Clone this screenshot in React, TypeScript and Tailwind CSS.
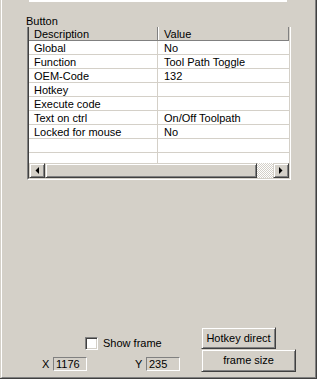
import React from "react";

const raised =
  "bg-[#d4d0c8] border border-t-[#d4d0c8] border-l-[#d4d0c8] border-r-[#404040] border-b-[#404040] shadow-[inset_1px_1px_#ffffff,inset_-1px_-1px_#808080]";

function ArrowLeft() {
  return (
    <svg width="4" height="7" viewBox="0 0 4 7" className="block">
      <polygon points="4,0 4,7 0.5,3.5" fill="#000" />
    </svg>
  );
}
function ArrowRight() {
  return (
    <svg width="4" height="7" viewBox="0 0 4 7" className="block">
      <polygon points="0,0 0,7 3.5,3.5" fill="#000" />
    </svg>
  );
}

export default function App() {
  const rows: [string, string][] = [
    ["Global", "No"],
    ["Function", "Tool Path Toggle"],
    ["OEM-Code", "132"],
    ["Hotkey", ""],
    ["Execute code", ""],
    ["Text on ctrl", "On/Off Toolpath"],
    ["Locked for mouse", "No"],
    ["", ""],
  ];
  return (
    <div className="w-[317px] h-[379px] bg-[#d4d0c8] pl-[1px] border-r border-b border-r-[#404040] border-b-[#404040] font-['Liberation_Sans',Arial,sans-serif] text-[11px] leading-[13px] text-black">
      <div className="h-full flex flex-col border-l border-l-white border-r border-r-[#808080] border-b border-b-[#808080]">
        {/* top white strip */}
        <div className="ml-[27px] w-[258px] h-[2px] bg-white" />
        {/* label */}
        <div className="ml-[24px] mt-[13px] h-[12px] leading-[13px]">Button</div>
        {/* list view */}
        <div className="ml-[25px] w-[264px] h-[153px] border-l border-l-[#808080] border-r border-r-white border-b border-b-white">
          <div className="h-full flex flex-col border-l border-l-[#404040] border-r border-r-[#d4d0c8] border-b border-b-[#d4d0c8]">
            {/* header */}
            <div className="h-[14px] flex border-b border-b-[#808080] bg-[#d4d0c8]">
              <div className="w-[129px] border-r border-r-[#808080] pl-[5px] pt-[2px] leading-[11px]">
                Description
              </div>
              <div className="flex-1 border-l border-l-white pl-[5px] pt-[2px] leading-[11px] border-r border-r-[#808080]">
                Value
              </div>
            </div>
            {/* rows */}
            {rows.map(([d, v], i) => (
              <div key={i} className="h-[14px] flex bg-white border-b border-b-[#d4d0c8]">
                <div className="w-[129px] border-r border-r-[#d4d0c8] pl-[5px] pt-[2px] leading-[11px] whitespace-nowrap">
                  {d}
                </div>
                <div className="flex-1 pl-[6px] pt-[2px] leading-[11px] whitespace-nowrap">{v}</div>
              </div>
            ))}
            <div className="flex-1 flex bg-white">
              <div className="w-[129px] border-r border-r-[#d4d0c8]" />
              <div className="flex-1" />
            </div>
            {/* horizontal scrollbar */}
            <div className="h-[15px] flex">
              <div className={`w-[16px] h-full flex items-center justify-center ${raised}`}>
                <ArrowLeft />
              </div>
              <div className={`flex-1 h-full ${raised}`} />
              <div className="w-[16px] h-full bg-[repeating-conic-gradient(#ffffff_0_25%,#d4d0c8_0_50%)] bg-[length:2px_2px]" />
              <div className={`w-[16px] h-full flex items-center justify-center ${raised}`}>
                <ArrowRight />
              </div>
            </div>
          </div>
        </div>

        {/* bottom controls */}
        <div className="mt-[147px] flex">
          <div className="w-[199px] flex flex-col">
            <div className="mt-[10px] ml-[83px] flex items-center h-[13px]">
              <div className="w-[13px] h-[13px] bg-white border border-t-[#808080] border-l-[#808080] border-r-white border-b-white shadow-[inset_1px_1px_#404040,inset_-1px_-1px_#d4d0c8]" />
              <span className="ml-[5px] whitespace-nowrap">Show frame</span>
            </div>
            <div className="mt-[7px] flex items-center h-[14px]">
              <span className="ml-[40px] w-[11px]">X</span>
              <div className="w-[34px] h-[14px] border border-t-[#808080] border-l-[#808080] border-r-white border-b-white pl-[2px] flex items-center">
                1176
              </div>
              <span className="ml-[48px] w-[11px]">Y</span>
              <div className="w-[34px] h-[14px] border border-t-[#808080] border-l-[#808080] border-r-white border-b-white pl-[2px] flex items-center">
                235
              </div>
            </div>
          </div>
          <div className="flex flex-col">
            <div className={`w-[75px] h-[22px] flex items-center justify-center whitespace-nowrap ${raised}`}>
              Hotkey direct
            </div>
            <div className={`w-[95px] h-[23px] flex items-center justify-center whitespace-nowrap ${raised}`}>
              frame size
            </div>
          </div>
        </div>
      </div>
    </div>
  );
}
